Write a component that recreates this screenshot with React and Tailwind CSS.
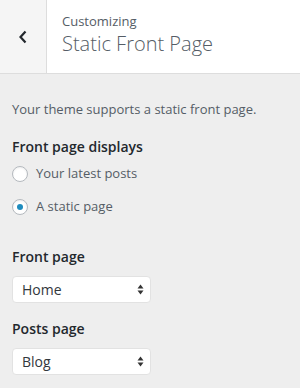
import React from "react";

const Radio = ({ checked, label }) => (
  <label className="flex items-center gap-[8px] h-[18px]">
    <span className="w-[16px] h-[16px] rounded-full border border-[#b4b9be] bg-white flex items-center justify-center shadow-[inset_0_1px_2px_rgba(0,0,0,0.07)]">
      {checked && <span className="w-[6px] h-[6px] rounded-full bg-[#1e8cbe]" />}
    </span>
    <span className="text-[13px] text-[#555d66]">{label}</span>
  </label>
);

const Select = ({ value }) => (
  <div className="w-[139px] h-[27px] bg-white border border-[#e2e2e2] rounded-[4px] flex items-center justify-between pl-[9px] pr-[6px]">
    <span className="text-[14px] text-[#32373c]">{value}</span>
    <svg width="7" height="11" viewBox="0 0 7 11">
      <path d="M3.5 0.5 L6.5 4.5 H0.5 Z" fill="#333" />
      <path d="M3.5 10.5 L6.5 6.5 H0.5 Z" fill="#333" />
    </svg>
  </div>
);

export default function App() {
  return (
    <div className="w-[300px] h-[388px] bg-[#eeeeee] font-['Open_Sans',sans-serif] overflow-hidden">
      <div className="flex h-[74px] border-b border-[#dddddd]">
        <div className="w-[47px] bg-[#f5f5f5] border-r border-[#dddddd] flex items-center justify-center">
          <svg width="10" height="14" viewBox="0 0 10 14">
            <path d="M7.5 1.5 L2.5 7 L7.5 12.5" stroke="#23282d" strokeWidth="2.2" fill="none" />
          </svg>
        </div>
        <div className="flex-1 bg-white pl-[15px] pt-[12px]">
          <div className="text-[13px] leading-[18px] text-[#555d66]">Customizing</div>
          <div className="text-[20px] leading-[28px] text-[#555d66] font-light">Static Front Page</div>
        </div>
      </div>
      <div className="px-[12px] pt-[26px]">
        <p className="text-[13px] leading-[18px] text-[#555d66]">Your theme supports a static front page.</p>
        <div className="mt-[19px] text-[14px] leading-[20px] font-semibold text-[#23282d]">Front page displays</div>
        <div className="mt-[8px] flex flex-col gap-[15px]">
          <Radio label="Your latest posts" />
          <Radio checked label="A static page" />
        </div>
        <div className="mt-[31px] text-[14px] leading-[20px] font-semibold text-[#23282d]">Front page</div>
        <div className="mt-[9px]"><Select value="Home" /></div>
        <div className="mt-[16px] text-[14px] leading-[20px] font-semibold text-[#23282d]">Posts page</div>
        <div className="mt-[9px]"><Select value="Blog" /></div>
      </div>
    </div>
  );
}
